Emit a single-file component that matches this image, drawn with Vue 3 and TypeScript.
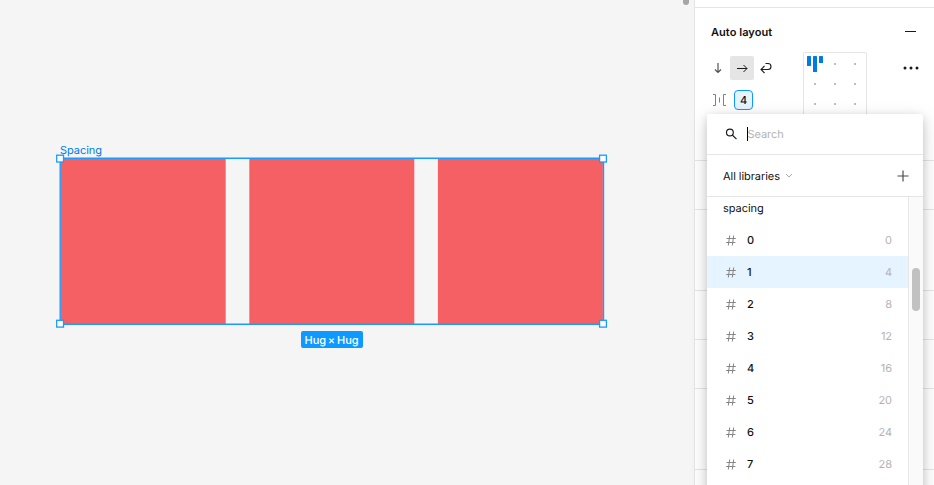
<script setup lang="ts">
interface Token {
  name: string
  value: number
}

// each step of the scale is four pixels
const tokens: Token[] = [0, 1, 2, 3, 4, 5, 6, 7].map((n) => ({ name: String(n), value: n * 4 }))
const selected = '1'
const dots = Array.from({ length: 9 }, (_, i) => i)
const sections = [49, 81, 49, 49, 81]
</script>

<template>
  <div class="app">
    <main class="canvas">
      <i class="canvas-scroll"></i>
      <div class="frame">
        <span class="frame-name">Spacing</span>
        <svg class="boxes" width="543" height="165" viewBox="0 0 543 165" fill="#f56065">
          <rect v-for="n in 3" :key="n" :x="(n - 1) * 188.600 - 0.300" width="165" height="165" />
        </svg>
        <svg class="outline" width="546" height="170" viewBox="0 0 546 170">
          <path d="M1.200 1.200H544.500V167.300H1.200Z" fill="none" stroke="#1a9bff" stroke-width="1.400" />
        </svg>
        <svg class="handles" width="554" height="178" viewBox="0 0 554 178" fill="#fff" stroke="#1a9bff" stroke-width="1.300">
          <rect x="1.700" y="2.200" width="6.800" height="6.800" />
          <rect x="544.600" y="2.200" width="6.800" height="6.800" />
          <rect x="1.700" y="167.300" width="6.800" height="6.800" />
          <rect x="544.600" y="167.300" width="6.800" height="6.800" />
        </svg>
        <span class="size-badge">Hug × Hug</span>
      </div>
    </main>

    <aside class="panel">
      <section class="auto-layout">
        <header class="title-row">
          <h2>Auto layout</h2>
          <svg width="12" height="12" viewBox="0 0 12 12"><path d="M0 5.500h11" stroke="#1a1a1a" /></svg>
        </header>
        <div class="controls">
          <div class="left-controls">
            <div class="directions">
              <button class="dir">
                <svg width="24" height="24" viewBox="0 0 24 24" fill="none" stroke="#4d4d4d" stroke-width="1.150"><path d="M12 7v9.500M9 13.500l3 3 3-3" /></svg>
              </button>
              <button class="dir active">
                <svg width="24" height="24" viewBox="0 0 24 24" fill="none" stroke="#1a1a1a"><path d="M7 12.500h10M13.500 9l3.500 3.500-3.500 3.500" /></svg>
              </button>
              <button class="dir">
                <svg width="24" height="24" viewBox="0 0 24 24" fill="none" stroke="#1a1a1a" stroke-width="1.100"><path d="M11.500 7.500h2.500a3 3 0 0 1 0 6H7M10.500 10L7 13.500l3.500 3.500" /></svg>
              </button>
            </div>
            <div class="gap-row">
              <svg width="15" height="14" viewBox="0 0 15 14" fill="none" stroke="#808080"><path d="M1 1.500h2.500v11H1M7.500 4.500v5M14 1.500h-2.500v11H14" /></svg>
              <span class="gap-value">4</span>
            </div>
          </div>
          <div class="align-grid">
            <div v-for="d in dots" :key="d" class="align-cell">
              <svg v-if="d === 0" width="16" height="16" viewBox="0 0 16 16" fill="#007be5">
                <rect x="0" width="4" height="10" rx=".6" /><rect x="6" width="4" height="16" rx=".6" /><rect x="12" width="4" height="7" rx=".6" />
              </svg>
              <i v-else class="dot"></i>
            </div>
          </div>
          <svg class="more" width="16" height="4" viewBox="0 0 16 4" fill="#1a1a1a"><circle cx="2" cy="2" r="1.500" /><circle cx="8" cy="2" r="1.500" /><circle cx="14" cy="2" r="1.500" /></svg>
        </div>
      </section>
      <section v-for="(h, i) in sections" :key="i" class="blank" :style="{ height: h + 'px' }"></section>

      <div class="popup">
        <div class="search">
          <svg width="12" height="12" viewBox="0 0 12 12" fill="none" stroke="#1a1a1a" stroke-width="1.150"><circle cx="4.900" cy="4.500" r="3.400" /><path d="M7.300 7l4.200 4.200" /></svg>
          <i class="caret"></i>
          <span>Search</span>
        </div>
        <div class="libraries">
          <span>All libraries</span>
          <svg class="chevron" width="8" height="6" viewBox="0 0 8 6" fill="none" stroke="#aaa"><path d="M1 1l3 3 3-3" /></svg>
          <svg class="plus" width="12" height="12" viewBox="0 0 12 12" stroke="#4d4d4d" stroke-width="1.200"><path d="M.5 6h11M6 .5v11" /></svg>
        </div>
        <div class="list">
          <div class="rows">
            <div class="group">spacing</div>
            <div v-for="t in tokens" :key="t.name" class="row" :class="{ selected: t.name === selected }">
              <svg width="10" height="11" viewBox="0 0 10 11" fill="none" stroke="#858585"><path d="M3.700.5L2.300 10.500M7.700.5L6.300 10.500M.6 3.500h9.200M.2 7.500h9.200" /></svg>
              <span class="name">{{ t.name }}</span>
              <span class="value">{{ t.value }}</span>
            </div>
          </div>
          <div class="track"><i class="thumb"></i></div>
        </div>
      </div>
    </aside>
  </div>
</template>

<style>
body { overflow: hidden; }
</style>

<style scoped>
.app { display: flex; width: 934px; height: 485px; overflow: hidden; font: 11px/16px Inter, sans-serif; letter-spacing: -0.050px; color: #111; background: #f5f5f5; text-rendering: geometricPrecision; }
.canvas { position: relative; width: 694px; padding: 159px 0 0 60.5px; box-sizing: border-box; }
.canvas-scroll { position: absolute; left: 683px; top: -10px; width: 6px; height: 15px; border-radius: 3px; background: #a6a6a6; }
.frame { position: relative; width: 543px; height: 165px; }
.frame-name { position: absolute; left: -0.500px; top: -17px; color: #007be5; }
.boxes { display: block; overflow: visible; }
.outline { position: absolute; left: -1.500px; top: -2px; }
.handles { position: absolute; left: -5.500px; top: -6px; }
.size-badge { position: absolute; left: 240px; top: 172px; width: 62px; height: 17px; line-height: 18px; text-align: center; border-radius: 2px; background: #0d99ff; color: #fff; font-weight: 500; letter-spacing: -0.050px; word-spacing: -1px; white-space: nowrap; }
.panel { position: relative; width: 240px; box-sizing: border-box; border-left: 1px solid #e5e5e5; background: #fff; }
.auto-layout { height: 154px; box-sizing: border-box; margin-top: 7px; padding: 16px 15px 0 16px; border-top: 1px solid #e5e5e5; border-bottom: 1px solid #e5e5e5; }
.title-row { display: flex; justify-content: space-between; align-items: center; height: 16px; padding-right: 2px; }
h2 { margin: 0; font-size: 11px; line-height: 16px; font-weight: 600; letter-spacing: 0.05px; }
.controls { display: flex; align-items: flex-start; margin-top: 12px; }
.left-controls { width: 92px; padding-top: 4px; margin-left: -5px; }
.directions { display: flex; }
.dir { width: 24px; height: 24px; padding: 0; border: 0; border-radius: 2px; background: none; }
.dir svg { display: block; }
.dir.active { background: #e5e5e5; }
.gap-row { display: flex; align-items: center; gap: 7px; height: 20px; margin-top: 10px; padding-left: 6px; }
.gap-value { width: 19px; height: 20px; box-sizing: border-box; border: 1px solid #0d99ff; border-radius: 4px; background: #e5f4ff; line-height: 18px; text-align: center; font-weight: 500; }
.align-grid { display: grid; grid-template-columns: repeat(3, 20px); grid-auto-rows: 20px; width: 64px; height: 64px; padding: 1px; margin-left: 5px; box-sizing: border-box; border: 1px solid #e5e5e5; border-radius: 2px; }
.align-cell { display: grid; place-items: center; }
.dot { width: 2px; height: 2px; background: #bdbdbd; }
.more { margin: 14px 0 0 auto; }
.blank { box-sizing: border-box; border-bottom: 1px solid #e5e5e5; }
.popup { position: absolute; left: 12px; top: 114px; width: 216px; height: 390px; border-radius: 2px; background: #fff; box-shadow: 0 5px 17px rgba(0, 0, 0, 0.2), 0 2px 7px rgba(0, 0, 0, 0.1); }
.search { display: flex; align-items: center; height: 41px; box-sizing: border-box; padding-left: 18px; border-bottom: 1px solid #e5e5e5; color: #b3b3b3; }
.caret { width: 1px; height: 14px; margin-left: 10px; background: #000; }
.search span { margin-left: -0.500px; }
.libraries { display: flex; align-items: center; height: 42px; box-sizing: border-box; padding: 0 14px 0 16px; border-bottom: 1px solid #e5e5e5; }
.chevron { margin-left: 5px; }
.plus { margin-left: auto; }
.list { display: flex; height: 307px; }
.rows { width: 201px; }
.group { height: 27px; padding: 3px 16px 0; box-sizing: border-box; }
.row { display: flex; align-items: center; height: 32px; padding: 0 16px 0 19px; box-sizing: border-box; }
.row.selected { background: #e5f4ff; }
.name { margin-left: 11px; font-weight: 500; }
.value { margin-left: auto; color: #b3b3b3; }
.track { width: 15px; box-sizing: border-box; padding: 71px 0 0 3px; border-left: 1px solid #e8e8e8; background: #fafafa; }
.thumb { display: block; width: 8px; height: 43px; border-radius: 4px; background: #c1c1c1; }
</style>
